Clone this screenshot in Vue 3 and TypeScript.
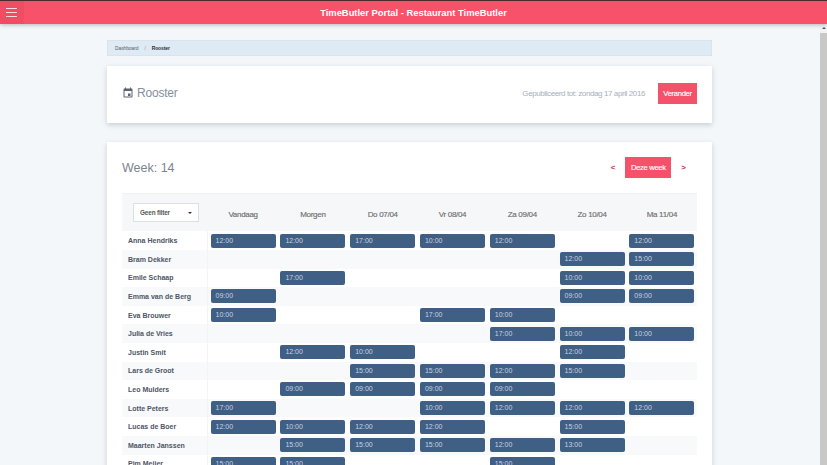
<script setup lang="ts">
interface Employee {
  name: string
  shifts: string[]
}

const days = ['Vandaag', 'Morgen', 'Do 07/04', 'Vr 08/04', 'Za 09/04', 'Zo 10/04', 'Ma 11/04']

const employees: Employee[] = [
  { name: 'Anna Hendriks', shifts: ['12:00', '12:00', '17:00', '10:00', '12:00', '', '12:00'] },
  { name: 'Bram Dekker', shifts: ['', '', '', '', '', '12:00', '15:00'] },
  { name: 'Emile Schaap', shifts: ['', '17:00', '', '', '', '10:00', '10:00'] },
  { name: 'Emma van de Berg', shifts: ['09:00', '', '', '', '', '09:00', '09:00'] },
  { name: 'Eva Brouwer', shifts: ['10:00', '', '', '17:00', '10:00', '', ''] },
  { name: 'Julia de Vries', shifts: ['', '', '', '', '17:00', '10:00', '10:00'] },
  { name: 'Justin Smit', shifts: ['', '12:00', '10:00', '', '', '12:00', ''] },
  { name: 'Lars de Groot', shifts: ['', '', '15:00', '15:00', '12:00', '15:00', ''] },
  { name: 'Leo Mulders', shifts: ['', '09:00', '09:00', '09:00', '09:00', '', ''] },
  { name: 'Lotte Peters', shifts: ['17:00', '', '', '10:00', '12:00', '12:00', '12:00'] },
  { name: 'Lucas de Boer', shifts: ['12:00', '10:00', '12:00', '12:00', '', '15:00', ''] },
  { name: 'Maarten Janssen', shifts: ['', '15:00', '15:00', '15:00', '12:00', '13:00', ''] },
  { name: 'Pim Meijer', shifts: ['15:00', '15:00', '', '', '15:00', '', ''] },
]
</script>

<template>
  <div class="page">
    <header class="topbar">
      <button class="menu" aria-label="Menu">
        <span></span><span></span><span></span>
      </button>
      <h1 class="brand">TimeButler Portal - Restaurant TimeButler</h1>
    </header>

    <div class="body">
      <main class="content">
        <nav class="crumbs">
          <span class="crumb">Dashboard</span>
          <span class="sep">/</span>
          <span class="crumb current">Rooster</span>
        </nav>

        <section class="card head-card">
          <div class="title">
            <svg class="cal" viewBox="0 0 24 24" width="12" height="12">
              <path fill="#5b6472" d="M19 3h-1V1h-2v2H8V1H6v2H5a2 2 0 0 0-2 2v14a2 2 0 0 0 2 2h14a2 2 0 0 0 2-2V5a2 2 0 0 0-2-2zm0 16H5V8h14v11z" />
              <rect fill="#5b6472" x="12" y="13" width="5" height="5" />
            </svg>
            <span>Rooster</span>
          </div>
          <div class="published">
            <span>Gepubliceerd tot: zondag 17 april 2016</span>
            <button class="btn change">Verander</button>
          </div>
        </section>

        <section class="card week-card">
          <div class="week-head">
            <h2>Week: 14</h2>
            <div class="pager">
              <span class="arrow">&lt;</span>
              <button class="btn this-week">Deze week</button>
              <span class="arrow">&gt;</span>
            </div>
          </div>

          <div class="roster">
            <div class="row head">
              <div class="name-col">
                <div class="filter">
                  <span>Geen filter</span>
                  <i class="caret"></i>
                </div>
              </div>
              <div v-for="day in days" :key="day" class="day">{{ day }}</div>
            </div>
            <div v-for="(emp, i) in employees" :key="emp.name" class="row" :class="{ odd: i % 2 === 1 }">
              <div class="name-col name">{{ emp.name }}</div>
              <div v-for="(shift, d) in emp.shifts" :key="d" class="cell">
                <div v-if="shift" class="shift">{{ shift }}</div>
              </div>
            </div>
          </div>
        </section>
      </main>

      <div class="scrollbar">
        <div class="up"></div>
        <div class="thumb"></div>
      </div>
    </div>
  </div>
</template>

<style scoped>
.page {
  width: 827px;
  height: 465px;
  display: flex;
  flex-direction: column;
  overflow: hidden;
  background: #f3f7fa;
  font-family: "Liberation Sans", Arial, sans-serif;
}

.topbar {
  flex: 0 0 24px;
  display: flex;
  align-items: center;
  position: relative;
  z-index: 2;
  background: #f75269;
  border-top: 1px solid #4a2a30;
  box-sizing: border-box;
  box-shadow: 0 1px 4px rgba(0, 0, 0, 0.25);
}

.menu {
  flex: 0 0 24px;
  height: 100%;
  padding: 0 6px;
  border: 0;
  background: #f04c63;
  display: flex;
  flex-direction: column;
  justify-content: center;
  gap: 2.5px;
  box-sizing: border-box;
}

.menu span {
  display: block;
  height: 1.2px;
  width: 11px;
  background: #ffdfe3;
}

.brand {
  flex: 1;
  margin: 0 0 0 -24px;
  text-align: center;
  color: #fff;
  font-size: 9.4px;
  font-weight: bold;
}

.body {
  flex: 1;
  display: flex;
  min-height: 0;
}

.content {
  flex: 1;
  min-width: 0;
  padding: 16px 108px 0 107px;
}

.crumbs {
  height: 16px;
  padding-left: 7px;
  display: flex;
  align-items: center;
  gap: 5px;
  background: #deebf4;
  border: 1px solid #d5e4ee;
  box-sizing: border-box;
  font-size: 5px;
  letter-spacing: -0.12px;
  color: #56606c;
}

.crumb.current {
  color: #2a303a;
  font-weight: bold;
}

.sep {
  color: #8a94a0;
  margin: 0 1px;
}

.card {
  background: #fff;
  box-shadow: 0 2px 5px rgba(90, 100, 110, 0.28);
}

.head-card {
  margin-top: 10px;
  height: 57px;
  padding: 0 15px;
  box-sizing: border-box;
  display: flex;
  align-items: center;
  justify-content: space-between;
}

.title {
  display: flex;
  align-items: center;
  gap: 3px;
  margin-bottom: 3px;
  font-size: 12px;
  letter-spacing: -0.2px;
  color: #878e9c;
}

.published {
  display: flex;
  align-items: center;
  gap: 13px;
  margin-bottom: 2px;
  font-size: 8px;
  letter-spacing: -0.4px;
  color: #a6afbe;
}

.btn {
  border: 0;
  padding: 0;
  background: #f4526a;
  color: #fff;
  font-family: "Liberation Sans", Arial, sans-serif;
  font-size: 7.6px;
  letter-spacing: -0.3px;
  -webkit-text-stroke: 0.15px #fff;
}

.change {
  width: 39px;
  height: 21px;
}

.week-card {
  margin-top: 19px;
  height: 400px;
  padding: 0 15px;
}

.week-head {
  height: 51px;
  display: flex;
  align-items: center;
  justify-content: space-between;
}

.week-head h2 {
  margin: 0;
  font-size: 12.5px;
  font-weight: normal;
  color: #7c8390;
}

.pager {
  display: flex;
  align-items: center;
  gap: 10px;
  margin-right: 11px;
}

.this-week {
  width: 46px;
  height: 21px;
}

.arrow {
  color: #d2345a;
  font-size: 8px;
  font-weight: bold;
}

.roster {
  width: 575px;
  border-top: 1px solid #f0f2f5;
}

.row {
  display: flex;
  height: 18.6px;
  align-items: center;
  background: #fff;
}

.row.odd {
  background: #f7f9fa;
}

.row.head {
  height: 37.4px;
  background: #f5f7f9;
}

.name-col {
  flex: 0 0 86.2px;
  box-sizing: border-box;
  padding-left: 6px;
}

.row:not(.head) .name-col {
  align-self: stretch;
  display: flex;
  align-items: center;
  border-right: 1px solid #f2f4f6;
}

.name {
  font-size: 7px;
  font-weight: bold;
  color: #4e5666;
}

.filter {
  width: 66px;
  height: 19px;
  margin-left: 5px;
  padding: 0 6px;
  box-sizing: border-box;
  display: flex;
  align-items: center;
  justify-content: space-between;
  background: #fff;
  border: 1px solid #dcdfe3;
  font-size: 6.4px;
  letter-spacing: -0.15px;
  font-weight: bold;
  color: #555;
}

.caret {
  width: 0;
  height: 0;
  border-left: 2px solid transparent;
  border-right: 2px solid transparent;
  border-top: 2px solid #333;
}

.day {
  flex: 0 0 69.8px;
  text-align: center;
  font-size: 8px;
  letter-spacing: -0.3px;
  color: #6f6f6f;
  -webkit-text-stroke: 0.15px #6f6f6f;
  padding-top: 3px;
}

.cell {
  flex: 0 0 69.8px;
  box-sizing: border-box;
  padding: 0 2.4px;
}

.shift {
  height: 14px;
  line-height: 13px;
  padding-left: 5px;
  background: #3f5f85;
  border-radius: 2px;
  color: #c9d3e0;
  font-size: 7px;
}

.scrollbar {
  flex: 0 0 7px;
  background: #f1f3f5;
  display: flex;
  flex-direction: column;
}

.up {
  height: 9px;
  flex: 0 0 9px;
  position: relative;
}

.up::after {
  content: "";
  position: absolute;
  left: 1.5px;
  top: 3px;
  border-left: 2px solid transparent;
  border-right: 2px solid transparent;
  border-bottom: 2px solid #555;
}

.thumb {
  flex: 1;
  background: #c8c8c6;
}
</style>

<style>
html, body { margin: 0; overflow: hidden; }
</style>
